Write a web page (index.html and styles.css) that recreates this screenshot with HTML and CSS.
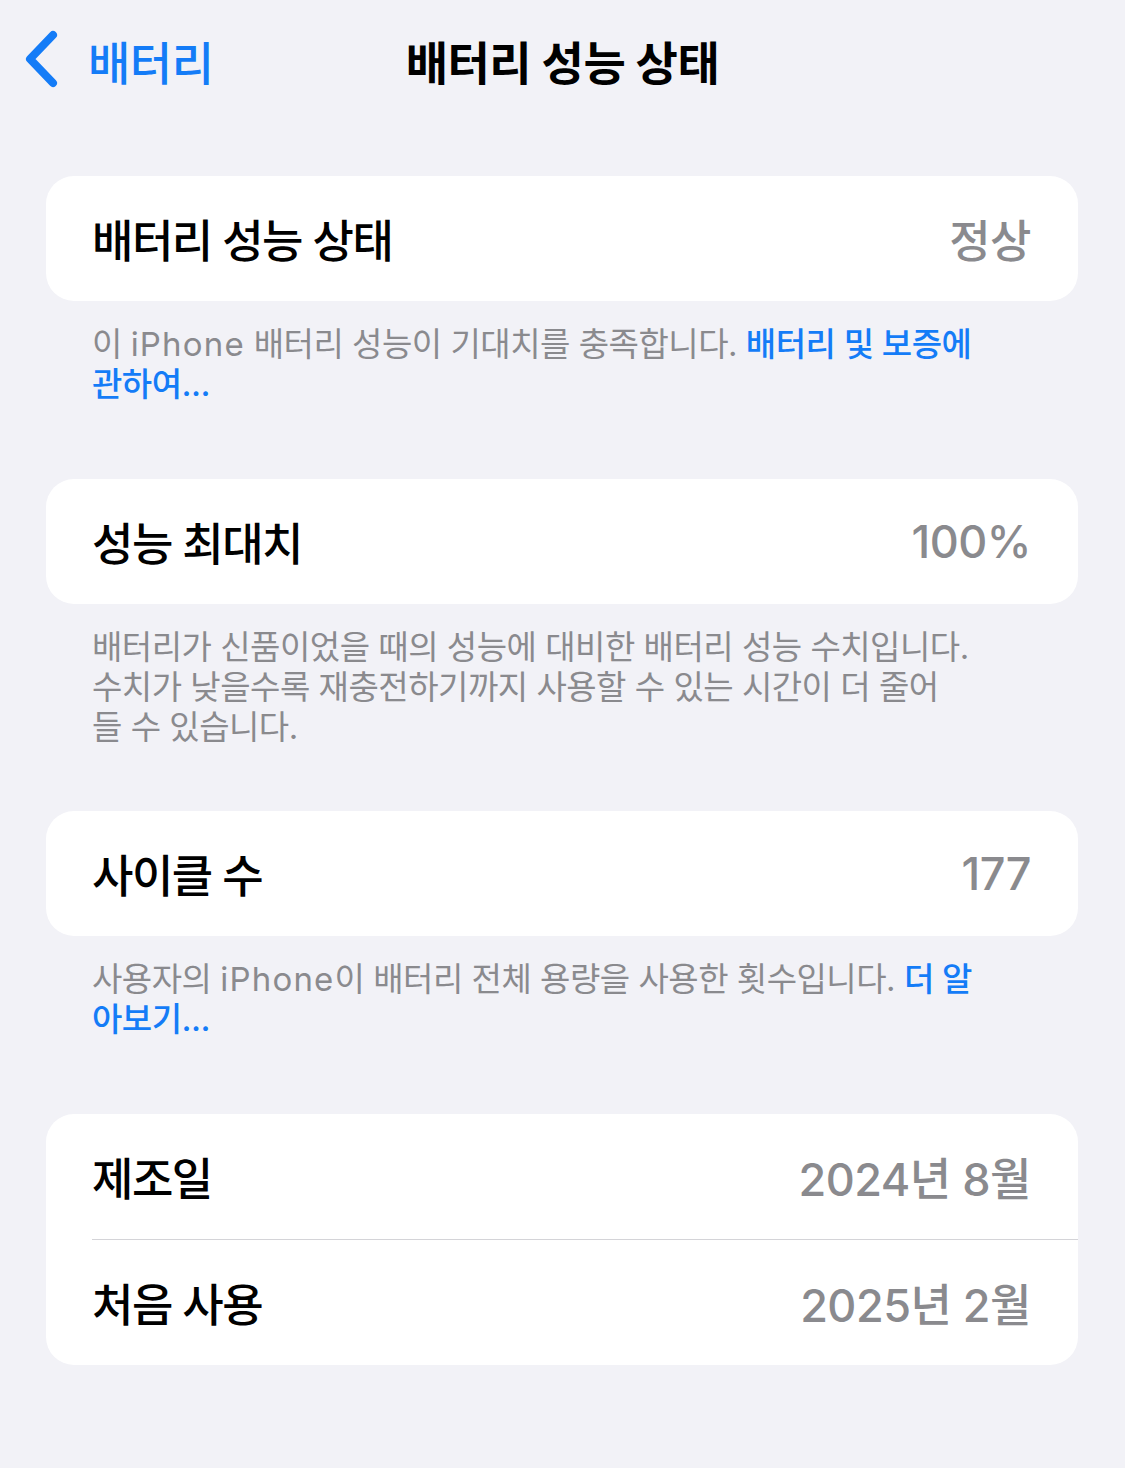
FILE: index.html
```html
<!DOCTYPE html>
<html lang="ko">
<head>
    <meta charset="UTF-8">
    <meta name="viewport" content="width=device-width, initial-scale=1.0">
    <title>배터리 성능 상태</title>
    <link rel="stylesheet" href="styles.css">
</head>
<body>
    <div class="nav">
        <a class="back" href="#">
            <svg class="chevron" width="40" height="60" viewBox="0 0 40 60">
                <path d="M33 5 L10 29 L33 53" fill="none" stroke="#147cf7" stroke-width="8" stroke-linecap="round" stroke-linejoin="round"/>
            </svg>
            <span>배터리</span>
        </a>
        <div class="title">배터리 성능 상태</div>
        <div></div>
    </div>

    <div class="group">
        <div class="card">
            <div class="row">
                <span class="label">배터리 성능 상태</span>
                <span class="value">정상</span>
            </div>
        </div>
        <p class="footer">이 <span class="en">iPhone</span> 배터리 성능이 기대치를 충족합니다. <a href="#">배터리 및 보증에<br>관하여...</a></p>
    </div>

    <div class="group">
        <div class="card">
            <div class="row">
                <span class="label">성능 최대치</span>
                <span class="value">100%</span>
            </div>
        </div>
        <p class="footer">배터리가 신품이었을 때의 성능에 대비한 배터리 성능 수치입니다.<br>수치가 낮을수록 재충전하기까지 사용할 수 있는 시간이 더 줄어<br>들 수 있습니다.</p>
    </div>

    <div class="group close">
        <div class="card">
            <div class="row">
                <span class="label">사이클 수</span>
                <span class="value">177</span>
            </div>
        </div>
        <p class="footer">사용자의 <span class="en">iPhone</span>이 배터리 전체 용량을 사용한 횟수입니다. <a href="#">더 알<br>아보기...</a></p>
    </div>

    <div class="group">
        <div class="card">
            <div class="row">
                <span class="label">제조일</span>
                <span class="value">2024년 8월</span>
            </div>
            <div class="row">
                <span class="label">처음 사용</span>
                <span class="value">2025년 2월</span>
            </div>
        </div>
    </div>
</body>
</html>
```

FILE: styles.css
```css
body {
    margin: 0;
    background-color: #f2f2f7;
    font-family: "Inter", "Noto Sans CJK KR", sans-serif;
    color: #000;
}
a {
    color: #147cf7;
    text-decoration: none;
}
.nav {
    display: grid;
    grid-template-columns: 1fr auto 1fr;
    align-items: center;
    height: 120px;
}
.back {
    display: flex;
    align-items: center;
    gap: 28px;
    padding-left: 20px;
    font-size: 46px;
    font-weight: 500;
    letter-spacing: -0.5px;
}
.chevron {
    display: block;
}
.title {
    font-size: 46px;
    font-weight: 700;
    letter-spacing: -0.5px;
}
.group {
    margin: 75px 47px 0 46px;
}
.nav + .group {
    margin-top: 56px;
}
.group.close {
    margin-top: 64px;
}
.card {
    background-color: #fff;
    border-radius: 28px;
    overflow: hidden;
}
.row {
    display: flex;
    justify-content: space-between;
    align-items: center;
    height: 125px;
    margin-left: 46px;
    padding-right: 47px;
}
.row + .row {
    border-top: 1.5px solid #d4d4d8;
}
.label {
    font-size: 45px;
    font-weight: 500;
    letter-spacing: -1.5px;
}
.value {
    font-size: 45px;
    font-weight: 500;
    color: #8a8a8e;
    letter-spacing: -0.5px;
}
.footer {
    margin: 23px 46px 0 46px;
    font-size: 33px;
    line-height: 40px;
    color: #8a8a8e;
    letter-spacing: -0.5px;
}
.footer .en {
    letter-spacing: 1.2px;
}
.footer a {
    font-weight: 500;
}
```
